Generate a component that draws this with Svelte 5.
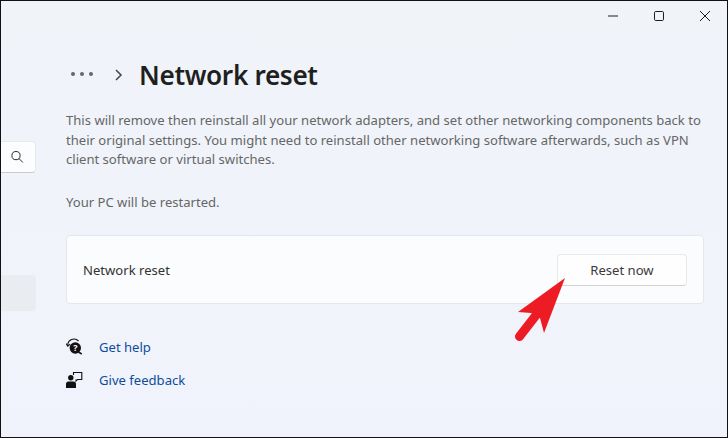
<script lang="ts">
  // Settings > Network reset page, with the sidebar cut off at the left edge.
  const paragraph =
    "This will remove then reinstall all your network adapters, and set other networking components back to their original settings. You might need to reinstall other networking software afterwards, such as VPN client software or virtual switches.";
</script>

<div class="window">
  <aside class="sidebar">
    <div class="search">
      <svg width="16" height="16" viewBox="0 0 16 16" fill="none" stroke="#2a2a2a" stroke-width="1">
        <circle cx="7" cy="6.600" r="4.100" />
        <path d="M10 9.600l3.600 3.600" stroke-linecap="round" />
      </svg>
    </div>
    <div class="nav-selected"></div>
  </aside>

  <div class="body">
    <div class="titlebar">
      <button class="ctl" aria-label="Minimize">
        <svg width="12" height="12" viewBox="0 0 12 12"><path d="M1 6h10" stroke="#1c1c1c" stroke-width="1" /></svg>
      </button>
      <button class="ctl" aria-label="Maximize">
        <svg width="12" height="12" viewBox="0 0 12 12"><rect x="1.500" y="1.500" width="9" height="9" rx="1.200" fill="none" stroke="#1c1c1c" stroke-width="1" /></svg>
      </button>
      <button class="ctl" aria-label="Close">
        <svg width="12" height="12" viewBox="0 0 12 12"><path d="M1 1l10 10M11 1L1 11" stroke="#1c1c1c" stroke-width="1" /></svg>
      </button>
    </div>

    <main class="content">
      <header class="crumbs">
        <span class="dots"><i></i><i></i><i></i></span>
        <svg class="chev" width="10" height="14" viewBox="0 0 10 14" fill="none" stroke="#444" stroke-width="1.500"><path d="M2 2l5 5-5 5" /></svg>
        <h1>Network reset</h1>
      </header>

      <p class="desc">{paragraph}</p>
      <p class="restart">Your PC will be restarted.</p>

      <section class="card">
        <span>Network reset</span>
        <button class="reset">Reset now</button>
      </section>

      <ul class="links">
        <li>
          <svg width="20" height="20" viewBox="0 0 20 20">
            <path d="M1.800 8.500A6.200 6.200 0 0 1 12.500 4" fill="none" stroke="#111" stroke-width="1.100" />
            <path d="M0 6.500l1.800 2.600 2.400-2" fill="none" stroke="#111" stroke-width="1.100" />
            <circle cx="9.300" cy="11" r="5.700" fill="#111" />
            <path d="M12.500 15l3.200 2" stroke="#111" stroke-width="1.500" />
            <text x="9.300" y="14.300" class="q">?</text>
          </svg>
          <a href="#help">Get help</a>
        </li>
        <li>
          <svg width="20" height="20" viewBox="0 0 20 20">
            <circle cx="4.800" cy="7.800" r="2.700" fill="#111" />
            <path d="M0 18v-4q0-2.500 2.500-2.500h5q2.500 0 2.500 2.500v4z" fill="#111" />
            <path d="M7.500 5V2.500h8.300v7h-4.300l-1.500 1.500V9.500" fill="none" stroke="#111" stroke-width="1.100" />
          </svg>
          <a href="#feedback">Give feedback</a>
        </li>
      </ul>
    </main>
  </div>

  <svg class="arrow" width="58" height="66" viewBox="0 0 58 66">
    <path d="M52 0L5 34l13 1 9 5 4 15z" fill="#ed1c24" />
    <path d="M6.500 58.500L24 36" stroke="#ed1c24" stroke-width="9" stroke-linecap="round" />
  </svg>
</div>

<style>
  :global(body) { margin: 0; }

  .window {
    position: relative;
    display: flex;
    width: 728px;
    height: 438px;
    box-sizing: border-box;
    overflow: hidden;
    border-left: 1px solid #111;
    outline: 1px solid #111;
    outline-offset: -1px;
    background: linear-gradient(180deg, #f0f4f9 0%, #f0f3fb 100%);
    font-family: "Noto Sans", "Open Sans", sans-serif;
    color: #1b1b1b;
  }

  .sidebar {
    flex: 0 0 35px;
    display: flex;
    flex-direction: column;
    padding-top: 141px;
  }
  .search {
    height: 32px;
    box-sizing: border-box;
    background: #fcfdfe;
    border: 1px solid #e6e9ed;
    border-left: 0;
    border-bottom-color: #c9cbce;
    border-radius: 0 4px 4px 0;
    display: flex;
    align-items: center;
    justify-content: flex-end;
    padding-right: 10px;
  }
  .nav-selected {
    height: 36px;
    margin-top: 102px;
    background: #e9edf1;
    border-radius: 0 4px 4px 0;
  }

  .body { flex: 1; display: flex; flex-direction: column; min-width: 0; }

  .titlebar { display: flex; justify-content: flex-end; height: 32px; }
  .ctl {
    width: 46px;
    border: 0;
    background: none;
    padding: 0;
    display: flex;
    align-items: center;
    justify-content: center;
  }

  .content { padding: 23px 24px 0 30px; }

  .crumbs { display: flex; align-items: center; height: 40px; margin-left: 5px; }
  .dots { display: flex; gap: 5px; width: 43px; margin-top: -3px; }
  .dots i { width: 4px; height: 4px; border-radius: 50%; background: #666; }
  .chev { margin-right: 15px; }
  h1 { margin: 0; font-size: 26.200px; letter-spacing: -0.350px; font-weight: 600; line-height: 40px; color: #1f1f1f; }

  .desc, .restart { margin: 0; font-size: 13.080px; line-height: 19.500px; color: #666; }
  .desc { margin-top: 16px; }
  .restart { margin-top: 23px; }

  .card {
    margin-top: 23px;
    height: 69px;
    box-sizing: border-box;
    display: flex;
    align-items: center;
    justify-content: space-between;
    padding: 1px 16px 0;
    background: #fbfcfe;
    border: 1px solid #e5e7eb;
    border-radius: 4px;
    font-size: 13.080px;
    color: #333;
  }
  .reset {
    width: 130px;
    height: 32px;
    box-sizing: border-box;
    background: #fefefe;
    border: 1px solid #e9e9e9;
    border-bottom-color: #d2d2d2;
    border-radius: 4px;
    font: inherit;
    color: #3a3a3a;
  }

  .links { list-style: none; margin: 26px 0 0; padding: 0; }
  .links li { display: flex; align-items: center; height: 33px; gap: 13px; font-size: 13.080px; }
  .links a { color: #0f4c9c; text-decoration: none; }
  .q { font-size: 9px; font-weight: 700; fill: #fff; text-anchor: middle; }

  .arrow { position: absolute; left: 512px; top: 278px; }
</style>
